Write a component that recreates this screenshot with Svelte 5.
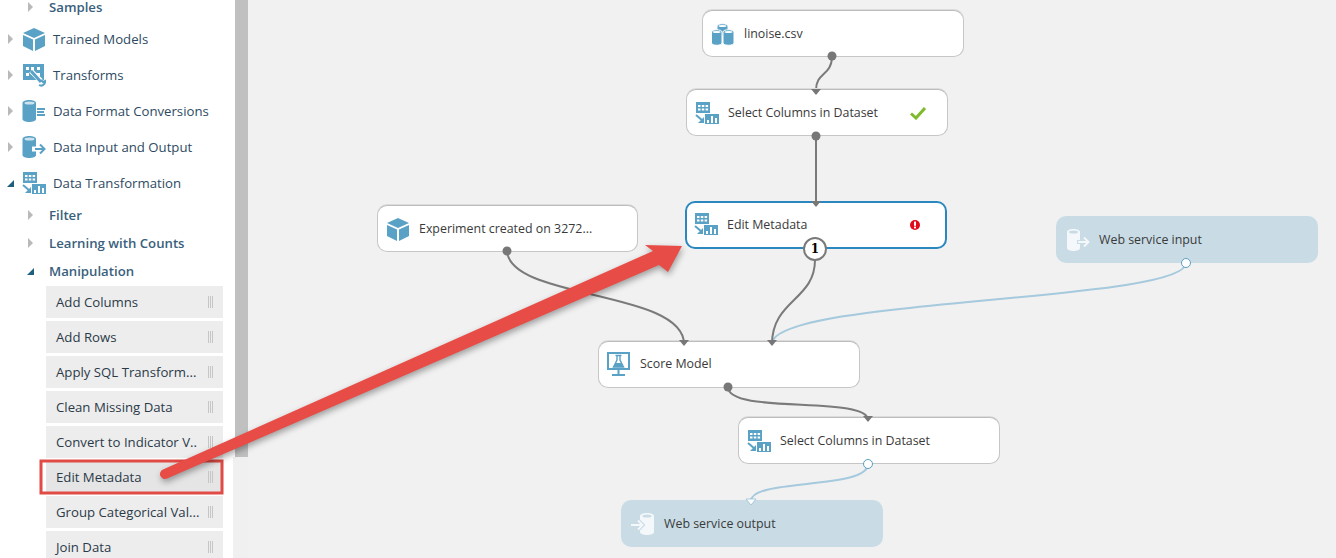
<script>
  const cats = [
    { label: 'Trained Models', icon: 'cube' },
    { label: 'Transforms', icon: 'wrench' },
    { label: 'Data Format Conversions', icon: 'format' },
    { label: 'Data Input and Output', icon: 'io' },
    { label: 'Data Transformation', icon: 'select', open: true }
  ];
  const subs = [
    { label: 'Filter' },
    { label: 'Learning with Counts' },
    { label: 'Manipulation', open: true }
  ];
  const items = ['Add Columns', 'Add Rows', 'Apply SQL Transform...', 'Clean Missing Data', 'Convert to Indicator V..', 'Edit Metadata', 'Group Categorical Val...', 'Join Data'];
  const nodes = [
    { label: 'linoise.csv', icon: 'dataset', x: 702, y: 10, w: 262 },
    { label: 'Select Columns in Dataset', icon: 'select', x: 686, y: 89, w: 262, status: 'ok' },
    { label: 'Edit Metadata', icon: 'select', x: 685, y: 201, w: 262, selected: true, status: 'err' },
    { label: 'Experiment created on 3272...', icon: 'cube', x: 377, y: 205, w: 261 },
    { label: 'Score Model', icon: 'flask', x: 598, y: 341, w: 262, raised: true },
    { label: 'Select Columns in Dataset', icon: 'select', x: 738, y: 417, w: 262 },
    { label: 'Web service input', icon: 'webin', x: 1056, y: 216, w: 262, web: true },
    { label: 'Web service output', icon: 'webout', x: 621, y: 500, w: 262, web: true }
  ];
  const gray = ['M832 56C832 76 816 72 816 90', 'M816 136L816 204', 'M815 260C815 300 772 300 772 344', 'M507 251C510 300 684 290 684 344', 'M728 387C728 415 868 395 868 420'];
  const blue = ['M1186 263C1186 302 772 298 772 344', 'M868 464C868 490 751 478 751 501'];
  const inputs = [[816, 90], [816, 202], [684, 341], [772, 341], [868, 417]];
  const outputs = [[832, 56], [816, 136], [507, 251], [728, 387]];
  const hollow = [[868, 464], [1186, 263]];
</script>

{#snippet icon(name)}
  {#if name === 'cube'}
    <svg class="ico" width="24" height="24" viewBox="0 0 24 24"><path d="M12 1L23 6L12 11L1 6Z" fill="#5aa1c6"/><path d="M1 8L11 12.500V24L1 19Z" fill="#5aa1c6"/><path d="M23 8L13 12.500V24L23 19Z" fill="#5aa1c6"/></svg>
  {:else if name === 'wrench'}
    <svg class="ico" width="24" height="24" viewBox="0 0 24 24"><rect x="1" y="1" width="21" height="16" fill="#5aa1c6"/><g fill="#fff"><rect x="4" y="4" width="3" height="3"/><rect x="9" y="4" width="3" height="3"/><rect x="15" y="4" width="3" height="3"/><rect x="4" y="10" width="3" height="3"/><rect x="15" y="10" width="3" height="3"/></g><path d="M9 8L19 18" stroke="#fff" stroke-width="5"/><path d="M9 8L19 19" stroke="#5aa1c6" stroke-width="3"/><path d="M17 22a4 4 0 0 0 6-4l-2 1-2-2" fill="none" stroke="#5aa1c6" stroke-width="2"/></svg>
  {:else if name === 'format'}
    <svg class="ico" width="24" height="24" viewBox="0 0 24 24"><path d="M0.500 4C0.500 0 14 0 14 4V20C14 24 0.500 24 0.500 20Z" fill="#5aa1c6"/><ellipse cx="7.500" cy="4" rx="5" ry="1.500" fill="#cfe3ee"/><g fill="#5aa1c6"><rect x="15" y="9" width="8" height="2"/><rect x="15" y="12" width="7" height="2"/><rect x="15" y="15" width="8" height="2"/></g></svg>
  {:else if name === 'io'}
    <svg class="ico" width="24" height="24" viewBox="0 0 24 24"><path d="M0.500 4C0.500 0 14 0 14 4V20C14 24 0.500 24 0.500 20Z" fill="#5aa1c6"/><ellipse cx="7.500" cy="4" rx="5" ry="1.500" fill="#cfe3ee"/><path d="M10 14H22" stroke="#fff" stroke-width="5"/><path d="M13 14H22M18 9.500L22.500 14L18 18.500" fill="none" stroke="#5aa1c6" stroke-width="2"/></svg>
  {:else if name === 'select'}
    <svg class="ico" width="24" height="22" viewBox="0 0 24 22"><rect x="1" y="0" width="14" height="11" fill="#5aa1c6"/><g fill="#fff"><rect x="3" y="3" width="2.500" height="2"/><rect x="6.800" y="3" width="2.500" height="2"/><rect x="10.600" y="3" width="2.500" height="2"/><rect x="3" y="6.500" width="2.500" height="2"/><rect x="6.800" y="6.500" width="2.500" height="2"/><rect x="10.600" y="6.500" width="2.500" height="2"/></g><path d="M1 13L8 19" stroke="#5aa1c6" stroke-width="2"/><path d="M9 15V21H3Z" fill="#5aa1c6"/><rect x="10" y="12" width="14" height="10" fill="#5aa1c6"/><g fill="#fff"><rect x="12" y="18" width="2" height="3"/><rect x="16" y="14" width="2" height="7"/><rect x="20" y="16" width="2" height="5"/></g></svg>
  {:else if name === 'dataset'}
    <svg class="ico" width="24" height="24" viewBox="0 0 24 24"><g fill="#5aa1c6" stroke="#fff" stroke-width="1"><path d="M6 4C6 1 17 1 17 4V14H6Z"/><path d="M0.500 10C0.500 7 11 7 11 10V21C11 24 .5 24 .5 21Z"/><path d="M12 10C12 7 23 7 23 10V21C23 24 12 24 12 21Z"/></g><g fill="#fff"><ellipse cx="11.500" cy="4" rx="4" ry="1.100"/><ellipse cx="5.700" cy="10" rx="4" ry="1.100"/><ellipse cx="17.500" cy="10" rx="4" ry="1.100"/></g></svg>
  {:else if name === 'flask'}
    <svg class="ico" width="24" height="24" viewBox="0 0 24 24"><rect x="1" y="1" width="21" height="16" fill="none" stroke="#5aa1c6" stroke-width="2"/><path d="M8.500 3.500H14.500M10 4V8L6.500 15H16.500L13 8V4" fill="none" stroke="#5aa1c6" stroke-width="1.400"/><path d="M8.500 11H14.500L16.500 15H6.500Z" fill="#5aa1c6"/><path d="M11.500 18V22M5 23H18" stroke="#5aa1c6" stroke-width="2"/></svg>
  {:else if name === 'webin'}
    <svg class="ico" width="24" height="24" viewBox="0 0 24 24"><path d="M1 4C1 0 14 0 14 4V20C14 24 1 24 1 20Z" fill="#f4f8fa"/><ellipse cx="7.500" cy="4" rx="4.500" ry="1.500" fill="#c9dce6"/><path d="M11 14H22M18 9.500L22.500 14L18 18.500" fill="none" stroke="#c9dce6" stroke-width="4"/><path d="M12 14H22M18 9.500L22.500 14L18 18.500" fill="none" stroke="#f4f8fa" stroke-width="1.800"/></svg>
  {:else if name === 'webout'}
    <svg class="ico" width="24" height="24" viewBox="0 0 24 24"><path d="M9 4C9 0 23 0 23 4V20C23 24 9 24 9 20Z" fill="#f4f8fa"/><ellipse cx="16" cy="4" rx="4.500" ry="1.500" fill="#c9dce6"/><path d="M0 13H11M7 8.500L11.500 13L7 17.500" fill="none" stroke="#c9dce6" stroke-width="4"/><path d="M0 13H11M7 8.500L11.500 13L7 17.500" fill="none" stroke="#f4f8fa" stroke-width="1.800"/></svg>
  {/if}
{/snippet}

<div class="page">
  <aside class="side">
    <div class="tree">
      <div class="sub first"><span class="tri"></span><span class="sublabel">Samples</span></div>
      {#each cats as c}
        <div class="cat">
          <span class={c.open ? 'tri open' : 'tri'}></span>
          {@render icon(c.icon)}
          <span class="catlabel">{c.label}</span>
        </div>
      {/each}
      <div class="subs">
        {#each subs as s}
          <div class="sub"><span class={s.open ? 'tri open' : 'tri'}></span><span class="sublabel">{s.label}</span></div>
        {/each}
      </div>
      <div class="items">
        {#each items as it}
          <div class={it === 'Edit Metadata' ? 'item hot' : 'item'}>
            <span>{it}</span><i class="grip"></i>
          </div>
        {/each}
      </div>
    </div>
    <div class="scroll"><div class="thumb"></div></div>
  </aside>

  <main class="canvas">
    <svg class="wires" width="1336" height="558" viewBox="0 0 1336 558">
      {#each blue as d}<path {d} fill="none" stroke="#a5c9dd" stroke-width="2"/>{/each}
      {#each gray as d}<path {d} fill="none" stroke="#7a7a7a" stroke-width="2"/>{/each}
    </svg>
    {#each nodes as n}
      <div class={['node', n.selected && 'selected', n.web && 'web', n.raised && 'raised']} style="left:{n.x - 248}px;top:{n.y}px;width:{n.w}px">
        {@render icon(n.icon)}
        <span class="nlabel">{n.label}</span>
        {#if n.status === 'ok'}
          <svg class="status ok" width="16" height="14" viewBox="0 0 16 14"><path d="M1 7.500L6 12L15 2" fill="none" stroke="#7fba2c" stroke-width="3"/></svg>
        {:else if n.status === 'err'}
          <svg class="status err" width="10" height="10" viewBox="0 0 10 10"><circle cx="5" cy="5" r="5" fill="#e00b1c"/><rect x="4" y="1.600" width="2" height="4.200" fill="#fff"/><rect x="4" y="6.600" width="2" height="1.800" fill="#fff"/></svg>
        {/if}
      </div>
    {/each}
    <svg class="wires top" width="1336" height="558" viewBox="0 0 1336 558">
      {#each inputs as [x, y]}<path d="M{x - 5} {y - 1}H{x + 5}L{x} {y + 5}Z" fill="#777"/>{/each}
      <path d="M746 499H756L751 505Z" fill="#fff" stroke="#a5c9dd"/>
      {#each outputs as [x, y]}<circle cx={x} cy={y} r="4.500" fill="#777"/>{/each}
      {#each hollow as [x, y]}<circle cx={x} cy={y} r="4.500" fill="#fff" stroke="#5a9fc4" stroke-width="1"/>{/each}
    </svg>
    <div class="badge">1</div>
  </main>

  <svg class="annot" width="1336" height="558" viewBox="0 0 1336 558">
    <rect x="41" y="461" width="181" height="32" fill="none" stroke="#e04b45" stroke-width="3"/>
    <path class="arrow" d="M163 469.400L653 251.100L645 245L682 246L668 272L659 264.900L167 478.600A5 5 0 0 1 163 469.400Z" fill="#e84c46"/>
  </svg>
</div>

<style>
  :global(body) { margin: 0; overflow: hidden; }
  .page {
    position: relative;
    display: flex;
    width: 1336px;
    height: 558px;
    overflow: hidden;
    font-family: "Open Sans", "Noto Sans", sans-serif;
    background: #f1f1f1;
  }
  .side {
    display: flex;
    flex: none;
    width: 248px;
    height: 558px;
    background: #fff;
  }
  .tree { flex: none; width: 233px; }
  .scroll { flex: 1; background: #f0f0f0; }
  .thumb { height: 457px; margin-left: 2px; background: #c0c0c0; box-shadow: -2px 0 0 #fff; }
  .cat {
    display: flex;
    align-items: center;
    height: 36px;
    padding-left: 8px;
    color: #2e4a62;
    font-size: 13.200px;
  }
  .cat .ico { margin-left: 9px; flex: none; }
  .catlabel { margin-left: 7px; white-space: nowrap; }
  .cat:last-child .catlabel { font-weight: 600; }
  .sub {
    display: flex;
    align-items: center;
    height: 28px;
    padding-left: 28px;
    font-size: 13.200px;
    font-weight: 600;
    color: #3a5f7d;
  }
  .sub.first { height: 21px; margin-top: -4px; margin-bottom: 4px; }
  .sublabel { margin-left: 16px; }
  .tri {
    flex: none;
    width: 0;
    height: 0;
    border-style: solid;
    border-width: 5px 0 5px 5px;
    border-color: transparent transparent transparent #b9b9b9;
  }
  .tri.open {
    border-width: 0 0 7px 7px;
    border-color: transparent transparent #1e5e7e transparent;
    margin-left: -1px;
    margin-right: -1px;
  }
  .items { display: flex; flex-direction: column; gap: 3px; margin: 1px 10px 0 46px; }
  .item {
    display: flex;
    align-items: center;
    justify-content: space-between;
    flex: none;
    height: 32px;
    padding: 0 10px;
    background: #ededed;
    color: #2b3a48;
    font-size: 13.200px;
    white-space: nowrap;
    overflow: hidden;
  }
  .item.hot { background: #e5e5e5; }
  .grip {
    flex: none;
    width: 5px;
    height: 12px;
    border-left: 1px solid #c6c6c6;
    border-right: 1px solid #c6c6c6;
    background: linear-gradient(#c6c6c6, #c6c6c6) center / 1px 100% no-repeat;
    box-sizing: border-box;
  }
  .canvas { position: relative; flex: 1; }
  .wires { position: absolute; left: -248px; top: 0; pointer-events: none; }
  .node {
    position: absolute;
    display: flex;
    align-items: center;
    box-sizing: border-box;
    height: 47px;
    padding-left: 8px;
    background: #fff;
    border: 1px solid #c6c6c6;
    border-top-color: #bdbdbd;
    border-radius: 10px;
    box-shadow: 0 -1px 0 #dcdcdc;
    color: #3a3a3a;
    font-size: 12.400px;
    white-space: nowrap;
  }
  .node .ico { flex: none; }
  .nlabel { margin-left: 9px; }
  .node.raised { padding-bottom: 2px; }
  .node.selected { height: 48px; border: 2px solid #2a88bf; box-shadow: none; padding: 0 0 2px 7px; }
  .node.web { background: #c9dce6; border: none; box-shadow: none; padding-left: 10px; }
  .status { position: absolute; }
  .status.ok { left: 223px; top: 16px; }
  .status.err { left: 223px; top: 17px; }
  .badge {
    position: absolute;
    left: 555px;
    top: 237px;
    box-sizing: border-box;
    width: 24px;
    height: 24px;
    display: flex;
    align-items: center;
    justify-content: center;
    border: 2px solid #7a7a7a;
    border-radius: 50%;
    background: #fff;
    color: #000;
    font: bold 12px "DejaVu Serif", serif;
  }
  .annot { position: absolute; left: 0; top: 0; pointer-events: none; }
  .arrow { filter: drop-shadow(1px 3px 3px rgba(0,0,0,.35)); }
</style>
